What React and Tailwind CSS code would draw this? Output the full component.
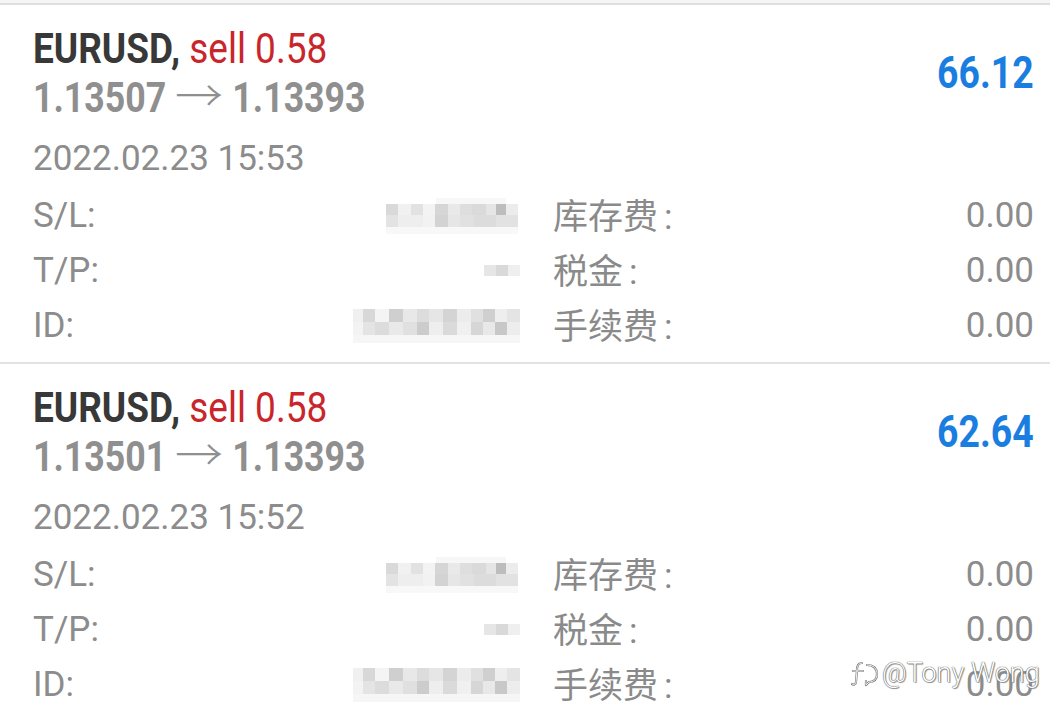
import React from "react";

const MOSAICS = {
  sl: {
    w: 134,
    h: 36,
    rects: [
      [50, 0, 70, 6, "#f7f7f7"],
      [0, 6, 12, 11, "#d9d9d9"], [12, 6, 13, 11, "#f1f1f1"], [25, 6, 12, 11, "#e2e2e2"], [37, 6, 12, 11, "#f3f3f3"],
      [49, 6, 13, 11, "#d6d6d6"], [62, 6, 12, 11, "#e9e9e9"], [74, 6, 12, 11, "#dedede"], [86, 6, 14, 11, "#dadada"],
      [100, 6, 10, 11, "#e5e5e5"], [110, 6, 10, 11, "#bdbdbd"], [120, 6, 12, 11, "#ececec"],
      [0, 17, 12, 12, "#e3e3e3"], [12, 17, 25, 12, "#eeeeee"], [37, 17, 12, 12, "#f2f2f2"], [49, 17, 13, 12, "#d3d3d3"],
      [62, 17, 12, 12, "#e6e6e6"], [74, 17, 14, 12, "#e1e1e1"], [88, 17, 22, 12, "#dcdcdc"], [110, 17, 22, 12, "#e2e2e2"],
      [0, 29, 132, 7, "#f8f8f8"],
    ],
  },
  tp: {
    w: 36,
    h: 11,
    rects: [[0, 0, 12, 11, "#e6e6e6"], [12, 0, 12, 11, "#d9d9d9"], [24, 0, 12, 11, "#efefef"]],
  },
  id: {
    w: 167,
    h: 34,
    rects: [
      [0, 0, 10, 13, "#f0f0f0"], [10, 0, 12, 13, "#d8d8d8"], [22, 0, 14, 13, "#f4f4f4"], [36, 0, 14, 13, "#cfcfcf"],
      [50, 0, 14, 13, "#e8e8e8"], [64, 0, 12, 13, "#dcdcdc"], [76, 0, 14, 13, "#e6e6e6"], [90, 0, 14, 13, "#d4d4d4"],
      [104, 0, 14, 13, "#ececec"], [118, 0, 12, 13, "#e0e0e0"], [130, 0, 12, 13, "#cfcfcf"], [142, 0, 12, 13, "#eeeeee"],
      [154, 0, 13, 13, "#e4e4e4"],
      [0, 13, 10, 13, "#f3f3f3"], [10, 13, 12, 13, "#e4e4e4"], [22, 13, 14, 13, "#dcdcdc"], [36, 13, 14, 13, "#e9e9e9"],
      [50, 13, 14, 13, "#e0e0e0"], [64, 13, 12, 13, "#cccccc"], [76, 13, 14, 13, "#eeeeee"], [90, 13, 14, 13, "#dadada"],
      [104, 13, 14, 13, "#f0f0f0"], [118, 13, 12, 13, "#d6d6d6"], [130, 13, 12, 13, "#e8e8e8"], [142, 13, 12, 13, "#c8c8c8"],
      [154, 13, 13, 13, "#ededed"],
      [0, 26, 167, 8, "#f6f6f6"],
    ],
  },
};

function Mosaic({ kind }) {
  const m = MOSAICS[kind];
  return (
    <svg width={m.w} height={m.h} viewBox={`0 0 ${m.w} ${m.h}`} className="block shrink-0">
      {m.rects.map(([x, y, w, h, c], i) => (
        <rect key={i} x={x} y={y} width={w} height={h} fill={c} />
      ))}
    </svg>
  );
}

const ROWS = [
  { label: "S/L:", mosaic: "sl", cn: "库存费" },
  { label: "T/P:", mosaic: "tp", cn: "税金" },
  { label: "ID:", mosaic: "id", cn: "手续费" },
];

function Entry({ open, profit, date }) {
  return (
    <div className="pl-[33px] pr-[16px] pt-[19px] pb-[9px]">
      <div className="flex items-center justify-between">
        <div>
          <div className="h-[49px] leading-[49px] whitespace-nowrap text-[43px]">
            <span className="inline-block origin-left scale-x-[0.86]">
              <span className="font-bold text-[#383838]">EURUSD,</span>
              <span className="text-[#c9252c]"> sell 0.58</span>
            </span>
          </div>
          <div className="h-[49px] leading-[49px] whitespace-nowrap text-[43px] text-[#8f8f8f]">
            <span className="inline-block origin-left scale-x-[0.83]">
              <span className="font-bold">{open}</span>
              <span> </span>
              <span className="inline-block origin-left scale-x-[1.35] font-light">→</span>
              <span className="inline-block w-[26px]" />
              <span className="font-bold">1.13393</span>
            </span>
          </div>
        </div>
        <div className="leading-[44px] text-[44px] font-bold text-[#1a7ee0]">
          <span className="inline-block origin-right scale-x-[0.85]">{profit}</span>
        </div>
      </div>
      <div className="mt-[9px] h-[55px] leading-[55px] text-[35px] text-[#8c8c8c]">{date}</div>
      <div className="mt-[2px] grid grid-cols-[487px_1fr] gap-x-[33px] text-[35px] text-[#8c8c8c]">
        {ROWS.map((r) => (
          <React.Fragment key={r.label}>
            <div className="flex h-[55px] items-center justify-between leading-[55px]">
              <span>{r.label}</span>
              <Mosaic kind={r.mosaic} />
            </div>
            <div className="flex h-[55px] items-center justify-between leading-[55px]">
              <span className="flex items-baseline text-[#8a8a8a]">
                <span className="font-['Noto_Sans_CJK_SC',sans-serif] text-[35px]">{r.cn}</span>
                <span className="ml-[6px]">:</span>
              </span>
              <span>0.00</span>
            </div>
          </React.Fragment>
        ))}
      </div>
    </div>
  );
}

export default function App() {
  return (
    <div className="relative h-[715px] w-[1050px] overflow-hidden bg-white font-['Roboto','Noto_Sans_CJK_SC',sans-serif]">
      <div className="h-[3px] bg-[#f5f5f5]" />
      <div className="h-[2px] bg-[#dedede]" />
      <Entry open="1.13507" profit="66.12" date="2022.02.23 15:53" />
      <div className="h-[2px] bg-[#e2e2e2]" />
      <Entry open="1.13501" profit="62.64" date="2022.02.23 15:52" />
      <div className="absolute left-[850px] top-[658px] flex items-center gap-[2px]">
        <svg width="30" height="30" viewBox="0 0 30 30" className="block">
          <path
            d="M12 5 C8 5 7 9 7 12 L6 24 C6 27 3 27 2 26 M3 13 L13 13 M17 7 C24 7 27 11 27 16 C27 21 24 24 19 24 L16 27 L16 23"
            fill="none"
            stroke="#7a7a7a"
            strokeWidth="2.2"
            strokeLinecap="round"
            strokeLinejoin="round"
          />
          <path
            d="M12 5 C8 5 7 9 7 12 L6 24 C6 27 3 27 2 26 M3 13 L13 13 M17 7 C24 7 27 11 27 16 C27 21 24 24 19 24 L16 27 L16 23"
            fill="none"
            stroke="#ffffff"
            strokeWidth="0.9"
            strokeLinecap="round"
            strokeLinejoin="round"
          />
        </svg>
        <span className="text-[27px] font-light leading-[30px] text-white [text-shadow:0_0_1px_#555,0_0_1px_#555,1px_1px_1px_#999]">
          @Tony Wong
        </span>
      </div>
    </div>
  );
}
